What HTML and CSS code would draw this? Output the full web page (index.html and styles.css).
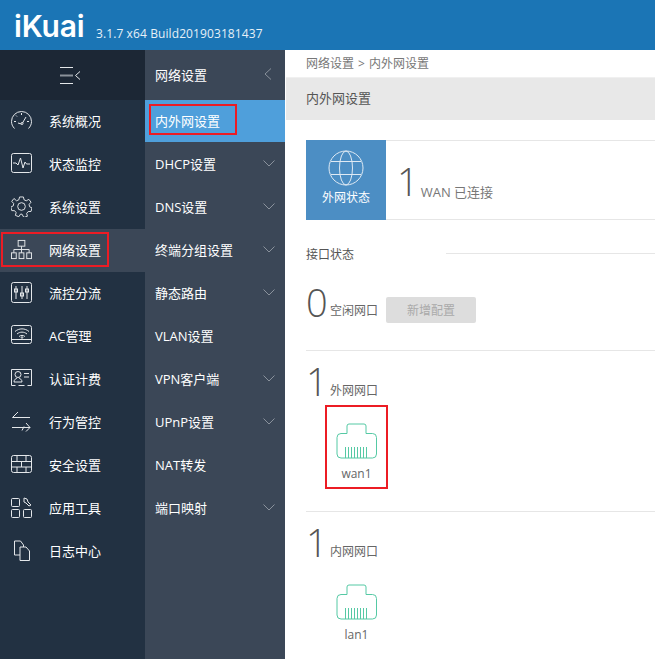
FILE: index.html
```html
<!DOCTYPE html>
<html>
<head>
  <meta charset="UTF-8">
  <title>iKuai 内外网设置</title>
  <link rel="stylesheet" href="styles.css">
</head>
<body>
  <div class="header">
    <span class="logo">iKuai</span>
    <span class="version">3.1.7 x64 Build201903181437</span>
  </div>
  <div class="layout">
    <div class="nav">
      <div class="nav-toggle">
        <svg width="20" height="17" viewBox="0 0 20 17" fill="none" stroke="#e4e7ea" stroke-width="1">
          <path d="M0 .5h13M0 16.500h13" />
          <path d="M0 8.500h13" stroke="#8b929b" stroke-width="2" />
          <path d="M20 4.500l-4.500 4 4.500 4" />
        </svg>
      </div>
      <div class="nav-item">
        <svg class="nav-icon" viewBox="0 0 21 21"><path d="M3.500 18.500C1.500 16.500 .5 14 .5 11.500A10 10 0 0 1 20.500 11.500C20.500 14 19.500 16.500 17.500 18.500M7 13l3.500 1M15 7l-3.500 6M3 11.500h2M16 11.500h2M5 5.500l1 1M10.500 3v2" /><circle cx="11" cy="13.500" r="1" /></svg>
        <span>系统概况</span>
      </div>
      <div class="nav-item">
        <svg class="nav-icon" viewBox="0 0 21 21"><rect x=".5" y=".5" width="20" height="19" rx="2" /><path d="M2 10h3l2 2 2.500-7 2.500 10 2-6 1.500 2h3.500" /></svg>
        <span>状态监控</span>
      </div>
      <div class="nav-item">
        <svg class="nav-icon" viewBox="0 0 22 22"><circle cx="11" cy="11" r="4" /><path d="M9 1h4l.7 3 2.300 1 2.700-1.500 2.300 3-2 2.300.4 2.400 2.600 1.300-1 3.700-3 .1-1.600 2 .8 2.900-3.700 1.300L11.500 19h-1.500l-1.800 2.700-3.600-1.400.8-2.900-1.600-2-3-.1-1-3.700 2.600-1.300.4-2.400-2-2.300 2.300-3L5.800 5 8.200 4z" /></svg>
        <span>系统设置</span>
      </div>
      <div class="nav-item active">
        <svg class="nav-icon" viewBox="0 0 22 22"><rect x="7.500" y="1.500" width="7" height="6" /><rect x=".5" y="14.500" width="5" height="6" /><rect x="8.500" y="14.500" width="5" height="6" /><rect x="16.500" y="14.500" width="5" height="6" /><path d="M11 7.500v7M3 14.500v-3.500h16v3.500" /></svg>
        <span>网络设置</span>
        <i class="mark mark-nav"></i>
      </div>
      <div class="nav-item">
        <svg class="nav-icon" viewBox="0 0 21 21"><rect x=".5" y=".5" width="20" height="20" rx="2" /><path d="M5 4v13M11 4v13M16 4v13" /><rect x="3.500" y="7" width="3" height="3" /><rect x="9.500" y="11" width="3" height="3" /><rect x="14.500" y="7" width="3" height="3" /></svg>
        <span>流控分流</span>
      </div>
      <div class="nav-item">
        <svg class="nav-icon" viewBox="0 0 21 21"><rect x=".5" y=".5" width="20" height="18" rx="2" /><path d="M1 14.500h19M4 6.500c4-3.500 10-3.500 14 0M6 9c3-2.500 7-2.500 10 0M8 11.500c2-1.500 4-1.500 6 0" /><circle cx="11" cy="12.500" r=".8" /></svg>
        <span>AC管理</span>
      </div>
      <div class="nav-item">
        <svg class="nav-icon" viewBox="0 0 21 21"><path d="M4.500 17.500H.5V1.500h20v16H16.500M7.500 17.500h6" /><circle cx="7" cy="6.500" r="3" /><path d="M3 14c0-3 2-3 3-4M11 14c0-3-2-3-3-4M3 14h8M13 5.500h5M13 9h5" /></svg>
        <span>认证计费</span>
      </div>
      <div class="nav-item">
        <svg class="nav-icon" viewBox="0 0 21 21"><path d="M19 6.500H1.500M7 1L1.500 6.500M1 16.500h18M15 12l4 4.500-4 4M11 19.500l2-4" /></svg>
        <span>行为管控</span>
      </div>
      <div class="nav-item">
        <svg class="nav-icon" viewBox="0 0 21 21"><rect x=".5" y="1.500" width="20" height="17" rx="2" /><path d="M1 7.500h19M1 13h19M6 1.500v6M15 1.500v6M10.500 7.500V13M6 13v5.500M15 13v5.500" /></svg>
        <span>安全设置</span>
      </div>
      <div class="nav-item">
        <svg class="nav-icon" viewBox="0 0 21 21"><rect x=".5" y="1.500" width="8" height="8" rx="1" /><rect x=".5" y="12.500" width="8" height="8" rx="1" /><rect x="12.500" y="12.500" width="8" height="8" rx="1" /><path d="M13 1l3 1 1 3 3 3-2 1-3-3-2-1z" /></svg>
        <span>应用工具</span>
      </div>
      <div class="nav-item">
        <svg class="nav-icon" viewBox="0 0 21 21"><path d="M9 15H3.500V1h6l3 4v2M9 7h6l3.500 4v9.500H9z" /></svg>
        <span>日志中心</span>
      </div>
    </div>

    <div class="subnav">
      <div class="subnav-title">
        <span>网络设置</span>
        <svg width="8" height="12" viewBox="0 0 8 12" fill="none" stroke="#8a929c"><path d="M7 .5L1 6l6 5.500" /></svg>
      </div>
      <div class="subnav-item current"><span>内外网设置</span><i class="mark mark-sub"></i></div>
      <div class="subnav-item"><span>DHCP设置</span><svg class="chev" viewBox="0 0 12 7"><path d="M.5.5L6 6 11.500.5" /></svg></div>
      <div class="subnav-item"><span>DNS设置</span><svg class="chev" viewBox="0 0 12 7"><path d="M.5.5L6 6 11.500.5" /></svg></div>
      <div class="subnav-item"><span>终端分组设置</span><svg class="chev" viewBox="0 0 12 7"><path d="M.5.5L6 6 11.500.5" /></svg></div>
      <div class="subnav-item"><span>静态路由</span><svg class="chev" viewBox="0 0 12 7"><path d="M.5.5L6 6 11.500.5" /></svg></div>
      <div class="subnav-item"><span>VLAN设置</span></div>
      <div class="subnav-item"><span>VPN客户端</span><svg class="chev" viewBox="0 0 12 7"><path d="M.5.5L6 6 11.500.5" /></svg></div>
      <div class="subnav-item"><span>UPnP设置</span><svg class="chev" viewBox="0 0 12 7"><path d="M.5.5L6 6 11.500.5" /></svg></div>
      <div class="subnav-item"><span>NAT转发</span></div>
      <div class="subnav-item"><span>端口映射</span><svg class="chev" viewBox="0 0 12 7"><path d="M.5.5L6 6 11.500.5" /></svg></div>
    </div>

    <div class="main">
      <div class="crumb">网络设置<span class="crumb-sep">&gt;</span>内外网设置</div>
      <div class="page-title">内外网设置</div>
      <div class="content">
        <div class="status-card">
          <div class="status-tile">
            <svg width="36" height="36" viewBox="0 0 36 36" fill="none" stroke="#dfeaf4">
              <circle cx="18" cy="18" r="17" />
              <ellipse cx="18" cy="18" rx="6.500" ry="17" />
              <path d="M3 11.500h30M3 24.500h30" />
            </svg>
            <span>外网状态</span>
          </div>
          <div class="status-info">
            <span class="big-num">1</span>
            <span class="status-text">WAN 已连接</span>
          </div>
        </div>

        <div class="section-head"><span>接口状态</span><i></i></div>

        <div class="count-row idle">
          <span class="big-num">0</span>
          <span class="count-label">空闲网口</span>
          <span class="add-btn">新增配置</span>
        </div>

        <div class="port-group wan">
          <div class="count-row">
            <span class="big-num">1</span>
            <span class="count-label">外网网口</span>
          </div>
          <div class="port">
            <svg width="41" height="36" viewBox="0 0 41 36" fill="none" stroke="#55c9a4">
              <path d="M11 10.500V3a2 2 0 0 1 2-2h15a2 2 0 0 1 2 2v7.500h6.500a4 4 0 0 1 4 4V31a4 4 0 0 1-4 4H5a4 4 0 0 1-4-4V14.500a4 4 0 0 1 4-4z" />
              <path d="M9.500 24v11M12.500 24v11M15.500 24v11M18.500 24v11M21.500 24v11M24.500 24v11M27.500 24v11M30.500 24v11" />
            </svg>
            <span>wan1</span>
            <i class="mark mark-port"></i>
          </div>
        </div>

        <div class="port-group lan">
          <div class="count-row">
            <span class="big-num">1</span>
            <span class="count-label">内网网口</span>
          </div>
          <div class="port">
            <svg width="41" height="36" viewBox="0 0 41 36" fill="none" stroke="#55c9a4">
              <path d="M11 10.500V3a2 2 0 0 1 2-2h15a2 2 0 0 1 2 2v7.500h6.500a4 4 0 0 1 4 4V31a4 4 0 0 1-4 4H5a4 4 0 0 1-4-4V14.500a4 4 0 0 1 4-4z" />
              <path d="M9.500 24v11M12.500 24v11M15.500 24v11M18.500 24v11M21.500 24v11M24.500 24v11M27.500 24v11M30.500 24v11" />
            </svg>
            <span>lan1</span>
          </div>
        </div>
      </div>
    </div>
  </div>
</body>
</html>
```

FILE: styles.css
```css
* {
  box-sizing: border-box;
}
html, body {
  margin: 0;
  height: 659px;
  overflow: hidden;
}
body {
  font-family: "Open Sans", "Noto Sans CJK SC", sans-serif;
  font-size: 13px;
  color: #666;
  background: #fff;
}
i {
  display: block;
}

/* header */
.header {
  height: 50px;
  background: #1b75b5;
  color: #fff;
  display: flex;
  align-items: flex-start;
  padding-left: 14px;
}
.logo {
  font-family: "Inter", sans-serif;
  font-size: 30px;
  font-weight: 600;
  line-height: 52px;
  letter-spacing: -.2px;
  width: 82px;
}
.version {
  font-size: 12px;
  font-weight: 500;
  letter-spacing: .1px;
  line-height: 18px;
  margin-top: 25px;
  color: #e6f0f7;
}

.layout {
  display: flex;
  height: 609px;
}

/* left menu */
.nav {
  width: 145px;
  background: #223142;
  color: #fff;
}
.nav-toggle {
  height: 50px;
  background: #1c2735;
  display: flex;
  align-items: center;
  justify-content: center;
  padding-right: 5px;
}
.nav-item {
  position: relative;
  height: 43px;
  display: flex;
  align-items: center;
  padding: 0 0 3px 11px;
}
.nav-item.active {
  background: #3b4757;
}
.nav-icon {
  width: 21px;
  height: 21px;
  margin-right: 17px;
  fill: none;
  stroke: #e4e7ea;
  stroke-width: 1;
}

/* second menu */
.subnav {
  width: 140px;
  background: #3b4757;
  color: #fff;
  font-size: 13px;
}
.subnav-title {
  height: 50px;
  display: flex;
  align-items: center;
  justify-content: space-between;
  padding: 0 13px 2px 10px;
  font-size: 13px;
}
.subnav-item {
  position: relative;
  height: 43px;
  display: flex;
  align-items: center;
  justify-content: space-between;
  padding: 0 10px;
}
.subnav-item.current {
  background: #4f9fdb;
  height: 42px;
  padding-bottom: 1px;
}
.chev {
  width: 12px;
  height: 7px;
  fill: none;
  stroke: #8a929c;
}

/* red annotations over the screenshot */
.mark {
  position: absolute;
  border: 2px solid #ec1c24;
  pointer-events: none;
}
.mark-nav {
  left: 1px;
  top: 3px;
  width: 108px;
  height: 35px;
}
.mark-sub {
  left: 4px;
  top: 4px;
  width: 88px;
  height: 31px;
}
.mark-port {
  left: -11px;
  top: -18px;
  width: 63px;
  height: 84px;
}

/* main area */
.main {
  flex: 1;
  min-width: 0;
  background: #fff;
}
.crumb {
  height: 27px;
  padding-left: 21px;
  font-size: 12px;
  line-height: 27px;
  color: #777;
}
.crumb-sep {
  margin: 0 4px;
}
.page-title {
  height: 43px;
  margin-left: 1px;
  padding-left: 20px;
  background: #e8e8e8;
  color: #555;
  line-height: 41px;
  border-top: 1px solid #f0f0f0;
}
.content {
  padding: 20px 0 0 21px;
}
.status-card {
  display: flex;
  height: 80px;
}
.status-tile {
  width: 80px;
  background: #4c8ec4;
  color: #fff;
  font-size: 12px;
  display: flex;
  flex-direction: column;
  align-items: center;
  padding-top: 10px;
}
.status-tile span {
  margin-top: 2px;
}
.status-info {
  flex: 1;
  border-top: 1px solid #e6e6e6;
  border-bottom: 1px solid #e6e6e6;
  display: flex;
  align-items: flex-end;
  padding: 0 0 16px 11px;
}
.big-num {
  font-family: "Open Sans", sans-serif;
  font-size: 38px;
  font-weight: 300;
  line-height: 44px;
  color: #555;
}
.status-text {
  color: #777;
  margin: 0 0 2px 2px;
}
.section-head {
  display: flex;
  align-items: center;
  height: 20px;
  margin-top: 24px;
  font-size: 12px;
  color: #555;
}
.section-head span {
  width: 140px;
}
.section-head i {
  flex: 1;
  border-top: 1px solid #e6e6e6;
  margin-top: -1px;
}
.count-row {
  display: flex;
  align-items: flex-end;
  height: 44px;
}
.count-row .big-num {
  width: 24px;
}
.count-label {
  font-size: 12px;
  color: #666;
  margin-bottom: 4px;
}
.idle {
  margin-top: 16px;
}
.idle .count-label {
  margin-bottom: 5px;
}
.add-btn {
  width: 90px;
  height: 26px;
  margin: 0 0 1px 8px;
  background: #ddd;
  border-radius: 2px;
  color: #aaa;
  text-align: center;
  line-height: 27px;
  font-size: 12px;
}
.port-group {
  border-top: 1px solid #e6e6e6;
}
.wan {
  margin-top: 26px;
  height: 161px;
  padding-top: 8px;
}
.lan {
  height: 147px;
  padding-top: 8px;
}
.count-row + .port {
  margin-top: 20px;
}
.port {
  position: relative;
  width: 41px;
  margin-left: 30px;
  display: flex;
  flex-direction: column;
  align-items: center;
  font-size: 12px;
  color: #666;
}
.port span {
  margin-top: 6px;
}
```
